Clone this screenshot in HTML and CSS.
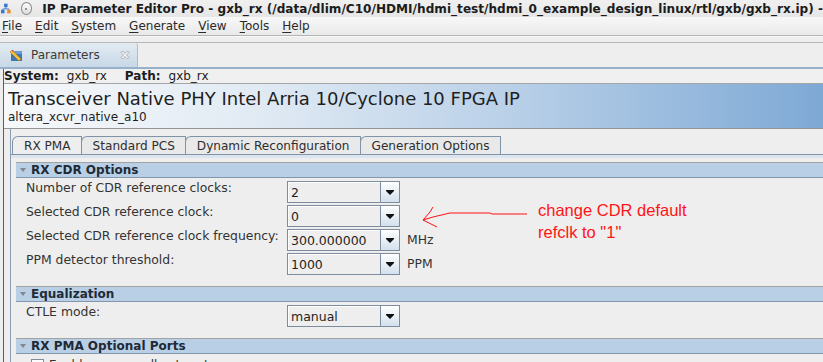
FILE: index.html
```html
<!DOCTYPE html>
<html lang="en">
<head>
    <meta charset="UTF-8">
    <title>IP Parameter Editor Pro</title>
    <link rel="stylesheet" href="styles.css">
</head>
<body>
    <div class="titlebar">
        <svg class="app-icon" width="11" height="11" viewBox="0 0 11 11">
            <path d="M5.5 4v2M2 6h7M2 6v1M9 6v1" stroke="#3a6fc0" stroke-width="1" fill="none"/>
            <rect x="3.5" y="0" width="4" height="4" fill="#3a78d0"/>
            <rect x="0" y="7" width="4" height="4" fill="#3a78d0"/>
            <rect x="7" y="7" width="4" height="4" fill="#e8902a"/>
        </svg>
        <span class="win-button"><span class="dot"></span></span>
        <span class="title">IP Parameter Editor Pro - gxb_rx (/data/dlim/C10/HDMI/hdmi_test/hdmi_0_example_design_linux/rtl/gxb/gxb_rx.ip) -</span>
    </div>

    <div class="menubar">
        <span><u>F</u>ile</span>
        <span><u>E</u>dit</span>
        <span><u>S</u>ystem</span>
        <span><u>G</u>enerate</span>
        <span><u>V</u>iew</span>
        <span><u>T</u>ools</span>
        <span><u>H</u>elp</span>
    </div>
    <div class="toolbar"></div>

    <div class="viewtabs">
        <div class="viewtab">
            <svg width="13" height="13" viewBox="0 0 13 13">
                <rect x="1" y="2" width="11" height="10" fill="#3f76b8"/>
                <rect x="1" y="2" width="11" height="3" fill="#6b9bd6"/>
                <path d="M2 1l9 9-2 2-9-9z" fill="#f2c236" stroke="#b07a18" stroke-width="0.6"/>
                <path d="M2 1l2 0-2 2z" fill="#d9503a"/>
            </svg>
            <span class="viewtab-label">Parameters</span>
            <svg class="close" width="10" height="10" viewBox="0 0 10 10">
                <path d="M1 2.5L2.5 1 5 3.5 7.5 1 9 2.5 6.5 5 9 7.5 7.5 9 5 6.5 2.5 9 1 7.5 3.5 5z" fill="#f4f4f4" stroke="#9c9c9c" stroke-width="0.8"/>
            </svg>
        </div>
    </div>

    <div class="main">
        <div class="pathbar">
            <b>System:</b><span class="path-value">gxb_rx</span>
            <b class="path-key">Path:</b><span class="path-value">gxb_rx</span>
        </div>

        <div class="ip-header">
            <div class="ip-title">Transceiver Native PHY Intel Arria 10/Cyclone 10 FPGA IP</div>
            <div class="ip-name">altera_xcvr_native_a10</div>
        </div>

        <div class="editor">
            <div class="tabs">
                <div class="tab active">RX PMA</div>
                <div class="tab">Standard PCS</div>
                <div class="tab">Dynamic Reconfiguration</div>
                <div class="tab">Generation Options</div>
            </div>

            <div class="tab-panel">
                <section class="group">
                    <div class="group-head"><span class="caret"></span>RX CDR Options</div>
                    <div class="rows">
                        <div class="label">Number of CDR reference clocks:</div>
                        <div class="combo"><span class="combo-value">2</span><span class="combo-btn"><span class="arrow"></span></span></div>
                        <div class="unit"></div>

                        <div class="label">Selected CDR reference clock:</div>
                        <div class="combo"><span class="combo-value">0</span><span class="combo-btn"><span class="arrow"></span></span></div>
                        <div class="unit"></div>

                        <div class="label">Selected CDR reference clock frequency:</div>
                        <div class="combo"><span class="combo-value">300.000000</span><span class="combo-btn"><span class="arrow"></span></span></div>
                        <div class="unit">MHz</div>

                        <div class="label">PPM detector threshold:</div>
                        <div class="combo"><span class="combo-value">1000</span><span class="combo-btn"><span class="arrow"></span></span></div>
                        <div class="unit">PPM</div>
                    </div>
                </section>

                <section class="group">
                    <div class="group-head"><span class="caret"></span>Equalization</div>
                    <div class="rows">
                        <div class="label">CTLE mode:</div>
                        <div class="combo"><span class="combo-value">manual</span><span class="combo-btn"><span class="arrow"></span></span></div>
                        <div class="unit"></div>
                    </div>
                </section>

                <section class="group">
                    <div class="group-head"><span class="caret"></span>RX PMA Optional Ports</div>
                    <div class="check-row">
                        <span class="checkbox"></span>
                        <span>Enable rx_pma_clkout port</span>
                    </div>
                </section>
            </div>
        </div>
    </div>

    <!-- red note drawn over the screenshot -->
    <svg class="note-arrow" width="823" height="362" viewBox="0 0 823 362">
        <polyline points="527,214 492,214 490,213 455,213 450,213 433,217 423,220" fill="none" stroke="#ff1010" stroke-width="1"/>
        <polyline points="433,207 430,212 423,220 437,227" fill="none" stroke="#ff1010" stroke-width="1"/>
    </svg>
    <div class="note">change CDR default<br>refclk to "1"</div>
</body>
</html>
```

FILE: styles.css
```css
* {
    box-sizing: border-box;
    margin: 0;
    padding: 0;
}

body {
    width: 823px;
    height: 362px;
    overflow: hidden;
    position: relative;
    background-color: #eeeeee;
    font-family: "DejaVu Sans", sans-serif;
    font-size: 12px;
    color: #333333;
}

/* window title */
.titlebar {
    height: 17px;
    display: flex;
    align-items: center;
    padding-left: 1px;
    background: linear-gradient(#f0f0f0, #e6e6e6);
    white-space: nowrap;
}

.win-button {
    width: 13px;
    height: 13px;
    margin-left: 10px;
    border: 1px solid #8a8a8a;
    border-radius: 50%;
    background: linear-gradient(#fdfdfd, #dcdcdc);
    display: flex;
    align-items: center;
    justify-content: center;
}

.win-button .dot {
    width: 2px;
    height: 2px;
    border-radius: 50%;
    background-color: #777;
}

.title {
    margin-left: 10px;
    font-weight: bold;
    font-size: 12.1px;
    color: #1c1c1c;
}

/* menu */
.menubar {
    height: 19px;
    display: flex;
    align-items: center;
    gap: 13px;
    padding-left: 2px;
    background: linear-gradient(#f8f8f8, #e9e9e9);
    border-bottom: 1px solid #b4b4b4;
    color: #2a2a2a;
}

.menubar u {
    text-decoration-thickness: 1px;
    text-underline-offset: 2px;
}

.toolbar {
    height: 7px;
    border-top: 1px solid #f8f8f8;
    border-bottom: 1px solid #b9b9b9;
    background-color: #eeeeee;
}

/* view tab strip */
.viewtabs {
    height: 26px;
    background-color: #eeeeee;
    border-bottom: 2px solid #98b1ca;
}

.viewtab {
    width: 138px;
    height: 24px;
    display: flex;
    align-items: center;
    padding: 0 7px 0 10px;
    background: linear-gradient(#e2ebf2, #c8d8e6);
    border-right: 1px solid #a9bccd;
    border-top-right-radius: 3px;
}

.viewtab-label {
    margin-left: 8px;
    color: #3a3a3a;
}

.viewtab .close {
    margin-left: auto;
}

/* main panel */
.main {
    margin-left: 3px;
    border-left: 1px solid #5e5e5e;
}

.pathbar {
    height: 15px;
    display: flex;
    align-items: center;
    background-color: #f0f0f0;
    border-bottom: 1px solid #a6a6a6;
    color: #1c1c1c;
}

.path-value {
    margin-left: 8px;
}

.path-key {
    margin-left: 18px;
}

.ip-header {
    height: 45px;
    padding: 4px 0 0 4px;
    background: linear-gradient(to right, #f6f8fa 0%, #e2ebf4 30%, #b9d0e8 62%, #7ea9d5 100%);
    border-bottom: 1px solid #959595;
    color: #1e1e1e;
}

.ip-title {
    font-size: 18px;
    line-height: 22px;
}

.ip-name {
    font-size: 12px;
    line-height: 14px;
}

/* editor with parameter tabs */
.editor {
    margin-left: 6px;
    padding-top: 7px;
    border-left: 1px solid #8c9db0;
}

.tabs {
    display: flex;
    padding-left: 1px;
    border-bottom: 1px solid #7f93a9;
}

.tab {
    height: 18px;
    padding: 0 10px 0 11px;
    display: flex;
    align-items: center;
    border: 1px solid #7f93a9;
    border-bottom: none;
    border-top-left-radius: 6px;
    margin-right: -1px;
    background-color: #e9e9e9;
    font-size: 12.1px;
    color: #2e2e2e;
}

.tab.active {
    background-color: #eeeeee;
}

.tab-panel {
    padding: 4px 0 0 5px;
    border-top: 3px solid #dbe4ef;
}

.group-head {
    height: 16px;
    display: flex;
    align-items: center;
    padding-left: 4px;
    background-color: #b9cfe6;
    border-top: 1px solid #a2a2a2;
    border-bottom: 1px solid #8296ad;
    font-weight: bold;
    color: #1e2a36;
}

.caret {
    width: 0;
    height: 0;
    margin-right: 5px;
    border-left: 3.5px solid transparent;
    border-right: 3.5px solid transparent;
    border-top: 4px solid #7d8792;
}

.rows {
    display: grid;
    grid-template-columns: 261px 113px auto;
    row-gap: 2px;
    padding: 3px 0 11px 10px;
    align-items: start;
}

.label {
    line-height: 14px;
    font-size: 12.4px;
    color: #333333;
}

.combo {
    height: 22px;
    display: flex;
    border: 1px solid #7d8d9e;
    background-color: #eeeeee;
}

.combo-value {
    flex: 1;
    padding-left: 2px;
    line-height: 20px;
    color: #1e1e1e;
    border-top: 1px solid #ffffff;
    border-left: 1px solid #ffffff;
    font-size: 12.5px;
}

.combo-btn {
    width: 19px;
    display: flex;
    flex-direction: column;
    align-items: center;
    justify-content: center;
    border-left: 1px solid #7d8d9e;
    background: linear-gradient(#ffffff, #d3e0ee);
}

.arrow {
    width: 0;
    height: 0;
    border-left: 4px solid transparent;
    border-right: 4px solid transparent;
    border-top: 4px solid #111111;
    margin-top: 2px;
    position: relative;
}

.arrow::before {
    content: "";
    position: absolute;
    left: -4px;
    top: -5px;
    width: 8px;
    height: 1px;
    background-color: #111111;
}

.unit {
    padding: 3px 0 0 7px;
    line-height: 15px;
    font-size: 12.4px;
}

.check-row {
    display: flex;
    align-items: center;
    gap: 5px;
    padding: 4px 0 0 15px;
}

.checkbox {
    width: 13px;
    height: 13px;
    border: 1px solid #7d8d9e;
    background: linear-gradient(#ffffff, #dde6ef);
}

/* annotation */
.note-arrow {
    position: absolute;
    left: 0;
    top: 0;
    pointer-events: none;
}

.note {
    position: absolute;
    left: 538px;
    top: 199px;
    font-family: "Liberation Sans", sans-serif;
    font-size: 16.5px;
    line-height: 22px;
    color: #ff1414;
}
```
